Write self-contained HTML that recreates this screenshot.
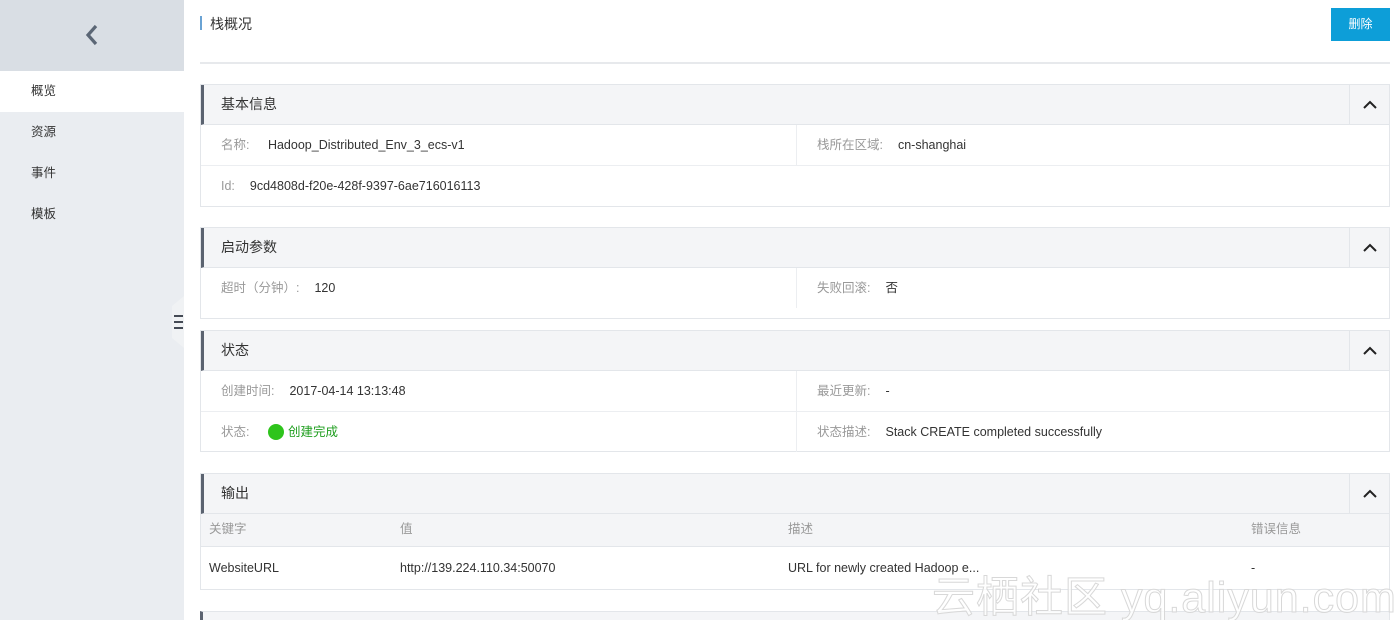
<!DOCTYPE html>
<html><head><meta charset="utf-8"><style>
*{margin:0;padding:0;box-sizing:border-box}
html,body{width:1400px;height:620px;overflow:hidden}
body{background:#fff;font-family:"Liberation Sans","Noto Sans CJK SC",sans-serif;font-size:12.5px;color:#333;position:relative}
.abs{position:absolute}
.side{left:0;top:0;width:184px;height:620px;background:#eaedf1}
.sidetop{left:0;top:0;width:184px;height:71px;background:#d9dee4}
.nav{position:absolute;left:0;width:184px;height:41px;line-height:41px;padding-left:31px;font-size:12.5px;color:#333}
.sec{position:absolute;left:200px;width:1190px;border:1px solid #e3e6ea;background:#fff}
.hd{height:40px;background:#f4f5f7;border-left:3px solid #5b6370;border-bottom:1px solid #e3e6ea;position:relative;font-size:14px;line-height:39px;padding-left:17px;color:#333}
.hd .col{position:absolute;right:0;top:0;width:40px;height:39px;border-left:1px solid #e3e6ea}
.row{height:41px;border-bottom:1px solid #eceef1;position:relative;line-height:40px}
.row:last-child{border-bottom:none}
.c{position:absolute;top:0;height:40px}
.c2{left:595px;border-left:1px solid #eceef1;padding-left:20px}
.lbl{color:#999;margin-right:15px}
</style></head><body>
<div class="abs side"></div>
<div class="abs sidetop"></div>
<svg class="abs" style="left:82px;top:22px" width="20" height="26" viewBox="0 0 20 26"><path d="M14 4 L6 13 L14 22" stroke="#5b6675" stroke-width="3.2" fill="none"/></svg>
<div class="nav" style="top:71px;background:#fff">概览</div>
<div class="nav" style="top:112px">资源</div>
<div class="nav" style="top:153px">事件</div>
<div class="nav" style="top:194px">模板</div>
<svg class="abs" style="left:168px;top:296px" width="18" height="52" viewBox="0 0 18 52"><path d="M16 0 L4 10 L4 42 L16 52 Z" fill="#f0f2f4"/><path d="M6 20h9M6 26h9M6 32h9" stroke="#444a55" stroke-width="2"/></svg>

<div class="abs" style="left:200px;top:16px;width:2px;height:14px;background:#6aa3d4"></div>
<div class="abs" style="left:210px;top:14px;font-size:14px;color:#333">栈概况</div>
<div class="abs" style="left:1331px;top:8px;width:59px;height:33px;background:#0d9ed8;color:#fff;text-align:center;line-height:33px;font-size:12px">删除</div>
<div class="abs" style="left:200px;top:62px;width:1190px;height:2px;background:#e7e9ec"></div>

<div class="sec" style="top:84px;height:123px">
<div class="hd">基本信息<div class="col"><svg width="40" height="39"><path d="M14 23 L20 17 L26 23" stroke="#222" stroke-width="2" fill="none"/></svg></div></div>
<div class="row"><div class="c" style="left:20px"><span class="lbl">名称:</span> Hadoop_Distributed_Env_3_ecs-v1</div><div class="c c2"><span class="lbl">栈所在区域:</span>cn-shanghai</div></div>
<div class="row"><div class="c" style="left:20px"><span class="lbl">Id:</span>9cd4808d-f20e-428f-9397-6ae716016113</div></div>
</div>

<div class="sec" style="top:227px;height:92px">
<div class="hd">启动参数<div class="col"><svg width="40" height="39"><path d="M14 23 L20 17 L26 23" stroke="#222" stroke-width="2" fill="none"/></svg></div></div>
<div class="row"><div class="c" style="left:20px"><span class="lbl">超时（分钟）:</span>120</div><div class="c c2"><span class="lbl">失败回滚:</span>否</div></div>
</div>

<div class="sec" style="top:330px;height:122px">
<div class="hd">状态<div class="col"><svg width="40" height="39"><path d="M14 23 L20 17 L26 23" stroke="#222" stroke-width="2" fill="none"/></svg></div></div>
<div class="row"><div class="c" style="left:20px"><span class="lbl">创建时间:</span>2017-04-14 13:13:48</div><div class="c c2"><span class="lbl">最近更新:</span>-</div></div>
<div class="row"><div class="c" style="left:20px"><span class="lbl">状态:</span> <span style="display:inline-block;width:16px;height:16px;border-radius:50%;background:#2ec41c;vertical-align:-4px;margin-right:4px"></span><span style="color:#1e9e1e">创建完成</span></div><div class="c c2"><span class="lbl">状态描述:</span>Stack CREATE completed successfully</div></div>
</div>

<div class="sec" style="top:473px;height:117px">
<div class="hd">输出<div class="col"><svg width="40" height="39"><path d="M14 23 L20 17 L26 23" stroke="#222" stroke-width="2" fill="none"/></svg></div></div>
<div style="height:33px;background:#f4f5f7;border-bottom:1px solid #e3e6ea;position:relative;color:#999;line-height:30px">
<span class="abs" style="left:8px">关键字</span><span class="abs" style="left:199px">值</span><span class="abs" style="left:587px">描述</span><span class="abs" style="left:1050px">错误信息</span></div>
<div style="height:42px;position:relative;line-height:42px">
<span class="abs" style="left:8px">WebsiteURL</span><span class="abs" style="left:199px">http://139.224.110.34:50070</span><span class="abs" style="left:587px">URL for newly created Hadoop e...</span><span class="abs" style="left:1050px">-</span></div>
</div>

<div class="sec" style="top:611px;height:20px;border-left:3px solid #5b6370;background:#f4f5f7"></div>
<div class="abs" style="left:932px;top:563px;font-size:43px;color:rgba(255,255,255,0.75);-webkit-text-stroke:1px #d8d8d8;letter-spacing:1px;white-space:nowrap">云栖社区 yq.aliyun.com</div>
</body></html>
